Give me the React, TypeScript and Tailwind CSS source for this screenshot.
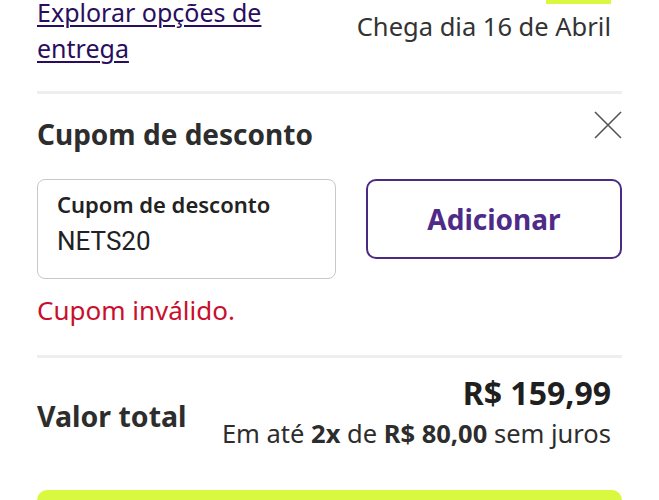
import React from "react";

export default function App() {
  return (
    <div className="w-[659px] h-[500px] overflow-hidden bg-white relative" style={{ fontFamily: "'Noto Sans', sans-serif" }}>
      <div className="absolute top-0 left-[546px] w-[65px] h-[4px] bg-[#d8f93f]" />
      <div className="px-[37px]">
        <div className="flex justify-between mt-[-8px] h-[99px]">
          <a className="text-[25px] leading-[36px] text-[#2a0e5e] underline underline-offset-[3px] decoration-[2px] w-[260px] pt-[2px]">
            Explorar opções de entrega
          </a>
          <div className="pr-[11px] pt-[18px] text-[25.5px] leading-[32px] text-[#333333]">Chega dia 16 de Abril</div>
        </div>
        <div className="h-[3px] bg-[#eeeeee]" />
        <div className="flex justify-between items-start pt-[20px]">
          <h2 className="text-[28px] leading-[40px] font-bold text-[#2d2d2d]">Cupom de desconto</h2>
          <svg width="28" height="28" viewBox="0 0 28 28" className="mt-[-3px]" fill="none" stroke="#555" strokeWidth="1.6">
            <path d="M1 1 L27 27 M27 1 L1 27" />
          </svg>
        </div>
        <div className="flex justify-between mt-[25px]">
          <div className="w-[299px] h-[100px] border border-[#c8c8c8] rounded-[8px] px-[19px] pt-[9px]">
            <div className="text-[22px] leading-[30px] font-semibold text-[#222]">Cupom de desconto</div>
            <div className="text-[26px] leading-[34px] text-[#222] mt-[5px]" style={{ fontFamily: "Roboto, sans-serif" }}>NETS20</div>
          </div>
          <button className="w-[256px] h-[80px] border-2 border-[#4a2a82] rounded-[10px] text-[28px] font-bold text-[#4f2b88]">
            Adicionar
          </button>
        </div>
        <div className="mt-[14px] text-[26px] leading-[34px] text-[#c8102e]">Cupom inválido.</div>
        <div className="h-[3px] bg-[#eeeeee] mt-[28px]" />
        <div className="flex justify-between items-center pr-[11px] mt-[16px]">
          <div className="text-[28.5px] font-bold text-[#2d2d2d] mt-[6px]">Valor total</div>
          <div className="flex flex-col items-end">
            <div className="text-[32px] leading-[38px] font-bold text-[#1f1f1f]">R$ 159,99</div>
            <div className="text-[25.5px] leading-[38px] text-[#2d2d2d] mt-[2px]">
              Em até <b>2x</b> de <b>R$ 80,00</b> sem juros
            </div>
          </div>
        </div>
        <div className="mt-[38px] h-[40px] rounded-[10px] bg-[#d8f93f]" />
      </div>
    </div>
  );
}
